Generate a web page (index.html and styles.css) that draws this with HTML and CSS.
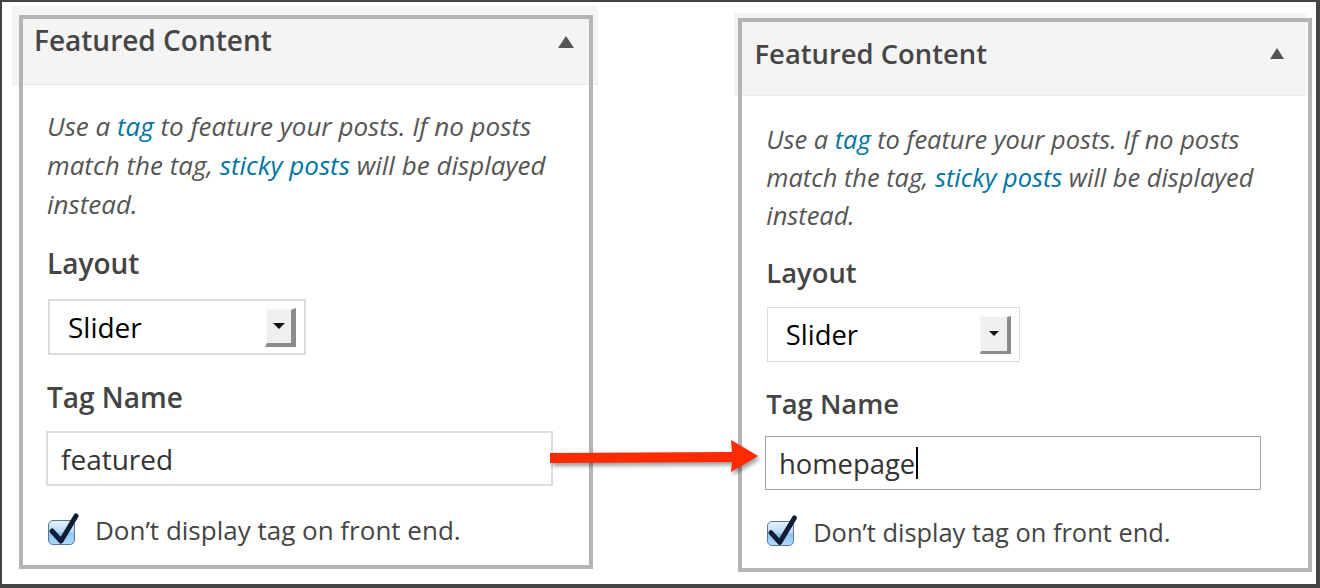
FILE: index.html
```html
<!DOCTYPE html>
<html lang="en">
<head>
<meta charset="utf-8">
<title>Featured Content</title>
<link rel="stylesheet" href="styles.css">
</head>
<body>
<div class="frame">
  <section class="widget widget--a">
    <div class="widget-inner">
      <div class="widget-top">
        <h3 class="widget-title">Featured Content</h3>
        <span class="toggle"></span>
      </div>
      <div class="widget-body">
        <p class="desc">Use a <a href="#">tag</a> to feature your posts. If no posts<br>match the tag, <a href="#">sticky posts</a> will be displayed<br>instead.</p>
        <div class="field-label">Layout</div>
        <div class="select"><span class="select-value">Slider</span><span class="select-btn"><span class="select-arrow"></span></span></div>
        <div class="field-label field-label--tag">Tag Name</div>
        <div class="input">featured</div>
        <div class="check-row">
          <span class="checkbox"><svg viewBox="0 0 32 32"><polyline points="3,18 12,28 27,3"/></svg></span>
          <span class="check-label">Don’t display tag on front end.</span>
        </div>
      </div>
    </div>
    <div class="highlight"></div>
  </section>

  <section class="widget widget--b">
    <div class="widget-inner">
      <div class="widget-top">
        <h3 class="widget-title">Featured Content</h3>
        <span class="toggle"></span>
      </div>
      <div class="widget-body">
        <p class="desc">Use a <a href="#">tag</a> to feature your posts. If no posts<br>match the tag, <a href="#">sticky posts</a> will be displayed<br>instead.</p>
        <div class="field-label">Layout</div>
        <div class="select"><span class="select-value">Slider</span><span class="select-btn"><span class="select-arrow"></span></span></div>
        <div class="field-label field-label--tag">Tag Name</div>
        <div class="input">homepage<span class="caret"></span></div>
        <div class="check-row">
          <span class="checkbox"><svg viewBox="0 0 32 32"><polyline points="3,18 12,28 27,3"/></svg></span>
          <span class="check-label">Don’t display tag on front end.</span>
        </div>
      </div>
    </div>
    <div class="highlight"></div>
  </section>

  <svg class="arrow" viewBox="0 0 216 42"><polygon points="2,17 184,16 183,4 210,20 183,36 184,26 2,27"/></svg>
</div>
</body>
</html>
```

FILE: styles.css
```css
* { box-sizing: border-box; }

html, body {
  margin: 0;
  padding: 0;
  background: #fff;
}

body {
  font-family: "Open Sans", "Liberation Sans", sans-serif;
}

.frame {
  position: relative;
  width: 1320px;
  height: 588px;
  border-style: solid;
  border-color: #444;
  border-width: 2px 4px 4px 2px;
  display: flex;
  align-items: flex-start;
  overflow: hidden;
  background: #fff;
}

.widget {
  position: relative;
  flex: none;
}

.widget--a {
  width: 586px;
  margin: 4px 0 0 10px;
}

.widget--b {
  width: 573px;
  margin: 11px 0 0 136px;
}

.widget-inner {
  width: 586px;
}

.widget--b .widget-inner {
  zoom: 0.978;
}

.widget-top {
  height: 79px;
  padding: 15px 24px 0 22px;
  background: #f4f4f4;
  border-bottom: 1px solid #ebebeb;
  display: flex;
  justify-content: space-between;
  align-items: flex-start;
}

.widget--b .widget-top {
  height: 85px;
  padding-top: 23px;
  padding-left: 21px;
}

.widget-title {
  margin: 0;
  font-size: 28px;
  line-height: 38px;
  font-weight: 600;
  color: #464646;
}

.toggle {
  width: 0;
  height: 0;
  border-left: 8px solid transparent;
  border-right: 8px solid transparent;
  border-bottom: 12px solid #555;
  margin-top: 15px;
}

.widget--b .toggle {
  margin-top: 13px;
}

.widget-body {
  padding: 22px 24px 0 35px;
}

.widget--b .widget-body {
  padding-top: 24px;
  padding-left: 33px;
}

.desc {
  margin: 0;
  font-size: 26px;
  line-height: 39px;
  font-style: italic;
  color: #555;
  white-space: nowrap;
}

.desc a {
  color: #0074a2;
  text-decoration: none;
}

.field-label {
  margin-top: 20px;
  font-size: 28px;
  line-height: 38px;
  font-weight: 600;
  color: #444;
}

.field-label--tag {
  margin-top: 23px;
}

.select {
  margin: 17px 0 0 1px;
  width: 258px;
  height: 56px;
  border: 2px solid #dcdcdc;
  padding: 0 8px 0 18px;
  display: flex;
  align-items: center;
  justify-content: space-between;
  background: #fff;
}

.select-value {
  font-size: 28px;
  line-height: 1;
  color: #000;
}

.select-btn {
  width: 31px;
  height: 39px;
  background: #efefef;
  border-style: solid;
  border-width: 2px 5px 4px 2px;
  border-color: #fbfbfb #8c8c8c #8c8c8c #fbfbfb;
  display: flex;
  align-items: center;
  justify-content: center;
}

.select-arrow {
  width: 0;
  height: 0;
  border-left: 6px solid transparent;
  border-right: 6px solid transparent;
  border-top: 6px solid #111;
}

.input {
  margin: 15px 0 0 -1px;
  width: 507px;
  height: 55px;
  border: 2px solid #dedede;
  padding-left: 13px;
  display: flex;
  align-items: center;
  font-size: 28px;
  color: #333;
  background: #fff;
}

.widget--b .input {
  border-color: #a4a4a4;
}

.caret {
  display: inline-block;
  width: 2px;
  height: 33px;
  background: #000;
  margin-left: 1px;
}

.check-row {
  margin-top: 25px;
  height: 39px;
  display: flex;
  align-items: flex-start;
}

.widget--b .check-row {
  margin-top: 23px;
}

.checkbox {
  position: relative;
  flex: none;
  width: 27px;
  height: 25px;
  margin: 9px 0 0 1px;
  border: 1px solid #56779c;
  border-radius: 5px;
  background: linear-gradient(#e3f0fc 0%, #bcd9f6 48%, #8fc3f3 52%, #b0dafc 100%);
}

.checkbox svg {
  position: absolute;
  left: 0;
  top: -8px;
  width: 32px;
  height: 32px;
  overflow: visible;
}

.checkbox polyline {
  fill: none;
  stroke: #0f1d35;
  stroke-width: 5;
  stroke-linecap: round;
  stroke-linejoin: round;
}

.check-label {
  margin-left: 20px;
  font-size: 26px;
  line-height: 39px;
  color: #444;
}

.highlight {
  position: absolute;
  width: 574px;
  height: 554px;
  border: 4px solid #b4b4b4;
  pointer-events: none;
}

.widget--a .highlight {
  left: 7px;
  top: 9px;
}

.widget--b .highlight {
  left: 4px;
  top: 5px;
}

.arrow {
  position: absolute;
  left: 546px;
  top: 434px;
  width: 216px;
  height: 42px;
  overflow: visible;
  filter: drop-shadow(2px 3px 2px rgba(0, 0, 0, 0.4));
}

.arrow polygon {
  fill: #ff2a00;
}
```
